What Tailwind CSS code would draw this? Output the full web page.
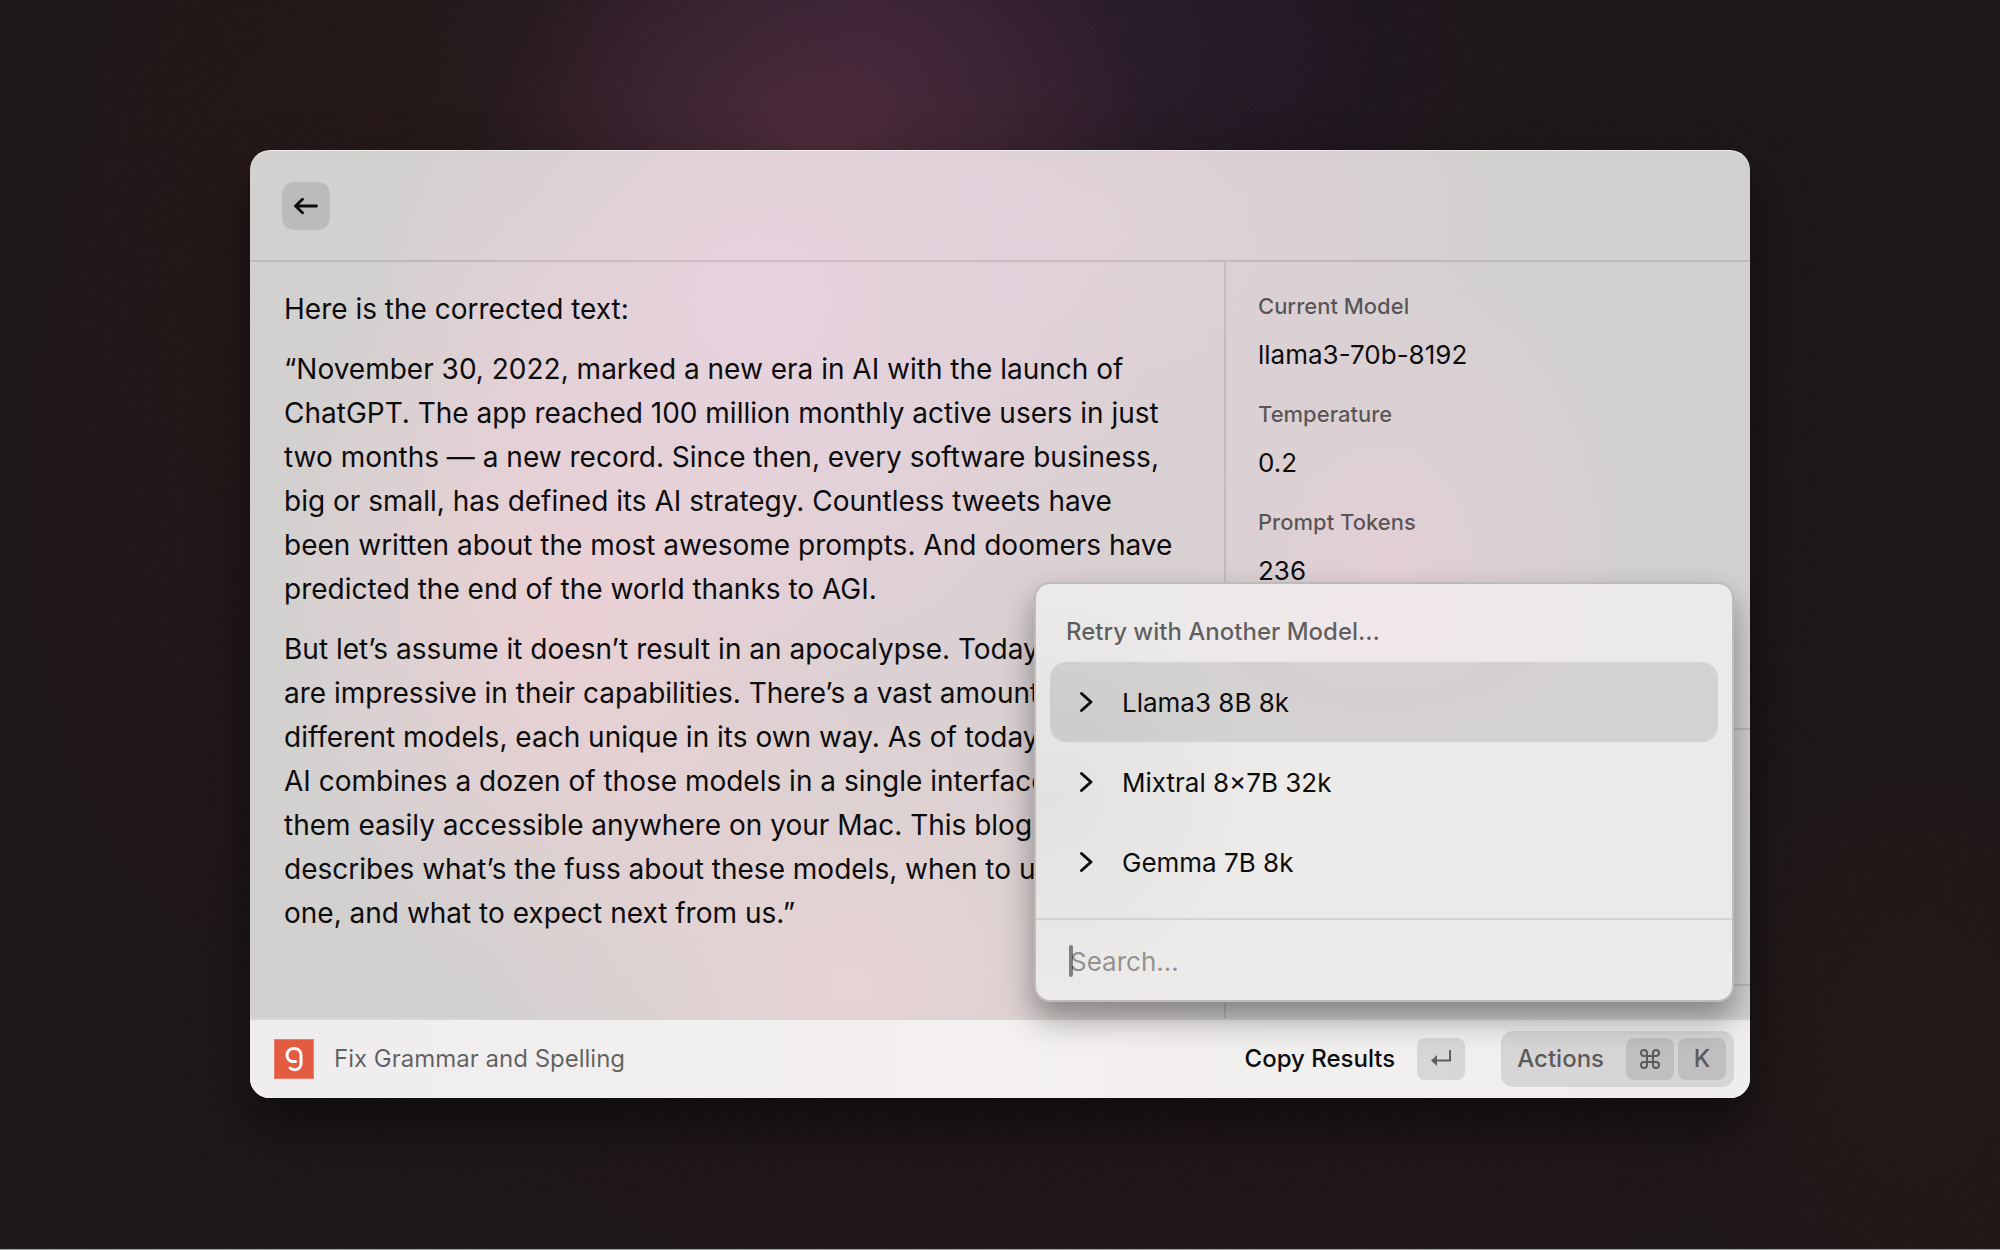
<!DOCTYPE html>
<html lang="en">
<head>
<meta charset="utf-8">
<meta name="viewport" content="width=device-width, initial-scale=1">
<title>Fix Grammar and Spelling</title>
<script src="https://cdn.jsdelivr.net/npm/@tailwindcss/browser@4"></script>
</head>
<body class="relative min-h-screen border-b border-[#a5a3a3] bg-[#1a1415] bg-[radial-gradient(ellipse_17%_22%_at_41%_12%,#522b3bcc,transparent),radial-gradient(ellipse_24%_30%_at_44%_4%,#381f36cc,transparent),radial-gradient(ellipse_12%_40%_at_12%_40%,#2c121566,transparent),radial-gradient(ellipse_18%_34%_at_19%_12%,#271614aa,transparent),radial-gradient(ellipse_16%_20%_at_64%_4%,#1e141f,transparent),radial-gradient(ellipse_40%_12%_at_58%_94%,#21111466,transparent),radial-gradient(ellipse_14%_30%_at_96%_84%,#201614,transparent)] px-[12.5%] pt-[150px] pb-[150px] font-['Inter',sans-serif] text-[#0c0c0c] [font-optical-sizing:none]">
<!-- fine grain over the desktop, behind the window -->
<svg class="pointer-events-none absolute inset-0 h-full w-full opacity-[0.05]" aria-hidden="true"><filter id="grain"><feTurbulence type="fractalNoise" baseFrequency="0.7" numOctaves="2" stitchTiles="stitch"/><feColorMatrix type="saturate" values="0"/></filter><rect width="100%" height="100%" filter="url(#grain)"/></svg>
<main class="relative rounded-[20px] bg-[#d3d0d0] bg-[radial-gradient(ellipse_26%_40%_at_34%_16%,#e6d2dc_10%,transparent),radial-gradient(ellipse_20%_44%_at_22%_48%,#ebd0d4,transparent),radial-gradient(ellipse_24%_32%_at_40%_88%,#e8d3d4,transparent),radial-gradient(ellipse_16%_34%_at_76%_44%,#e3d0d7,transparent),radial-gradient(ellipse_30%_30%_at_54%_8%,#e1d1d9,transparent),radial-gradient(ellipse_40%_50%_at_40%_40%,#dfd0d5,transparent)] shadow-[inset_0_1px_0_#eeeaeb,0_28px_56px_rgba(0,0,0,0.5)]">
  <header class="h-28 border-b-2 border-black/10 px-8 pt-8">
    <button type="button" aria-label="Back" class="flex size-12 items-center justify-center rounded-xl bg-black/10">
      <svg class="h-6 w-6" viewBox="0 0 24 24" fill="none" stroke="currentColor" stroke-width="2.8" stroke-linecap="round" stroke-linejoin="round"><path d="M1.500 12h21M8.500 5.300L1.500 12l7 6.700"/></svg>
    </button>
  </header>

  <div class="flex">
    <article class="min-w-0 flex-1 space-y-4 pt-[25px] pr-6 pb-[83px] pl-[34px] text-[28px] leading-[44px]">
      <p>Here is the corrected text:</p>
      <p>“November 30, 2022, marked a new era in AI with the launch of<br>ChatGPT. The app reached 100 million monthly active users in just<br>two months — a new record. Since then, every software business,<br>big or small, has defined its AI strategy. Countless tweets have<br>been written about the most awesome prompts. And doomers have<br>predicted the end of the world thanks to AGI.</p>
      <p>But let’s assume it doesn’t result in an apocalypse. Today’s LLMs<br>are impressive in their capabilities. There’s a vast amount of<br>different models, each unique in its own way. As of today, Raycast<br>AI combines a dozen of those models in a single interface, making<br>them easily accessible anywhere on your Mac. This blog post<br>describes what’s the fuss about these models, when to use which<br>one, and what to expect next from us.”</p>
    </article>
    <aside class="flex w-[526px] flex-col border-l-2 border-black/10 text-[26px] leading-8">
      <dl class="space-y-[27px] px-8 pt-7">
        <div class="space-y-[17px]">
          <dt class="text-[22px] font-medium text-black/60">Current Model</dt>
          <dd>llama3-70b-8192</dd>
        </div>
        <div class="space-y-[17px]">
          <dt class="text-[22px] font-medium text-black/60">Temperature</dt>
          <dd>0.2</dd>
        </div>
        <div class="space-y-[17px]">
          <dt class="text-[22px] font-medium text-black/60">Prompt Tokens</dt>
          <dd>236</dd>
        </div>
      </dl>
      <div class="mt-auto h-[258px] border-y-2 border-black/10"></div>
      <div class="h-8"></div>
    </aside>
  </div>

  <footer class="flex h-20 items-center rounded-b-[20px] border-t-2 border-[#d8d5d5] bg-[#efeeed] bg-linear-to-r from-[#efedee] via-[#f3f0ef] to-[#efedee] pr-4 pl-6 text-2xl">
    <svg class="size-10" viewBox="0 0 40 40" fill="none" role="img" aria-label="Grammar"><path fill="#e35c41" d="M0 0h40v40H0z"/><path stroke="#ea8069" d="M.5.5h39v39H.5z"/><path stroke="#fff" stroke-width="3" stroke-linecap="round" d="M21.500 22.500H19C15.300 22.500 13 20 13 16.300C13 12.300 15.800 9.500 20 9.500C24.200 9.500 27 12.300 27 16.300V24C27 28 24.700 30.700 21 30.700C19 30.700 17.300 30.200 16 29"/></svg>
    <span class="ml-5 text-black/60">Fix Grammar and Spelling</span>
    <button type="button" class="ml-auto flex items-center gap-[22px] font-medium">Copy Results
      <kbd class="flex h-[42px] w-12 items-center justify-center rounded-lg bg-black/10 text-[#5f5e5e]">
        <svg class="size-6" viewBox="0 0 24 24" fill="none" stroke="currentColor" stroke-width="2"><path d="M21 3v10.500H6"/><path d="M8 8v11L2 13.500z" fill="currentColor" stroke="none"/></svg>
      </kbd>
    </button>
    <button type="button" class="ml-9 flex h-14 items-center rounded-xl bg-black/10 pr-2 pl-4 font-medium text-[#5c5b5b]">Actions
      <kbd class="ml-[22px] flex h-[42px] w-12 items-center justify-center rounded-lg bg-black/10">
        <svg class="size-6" viewBox="0 0 24 24" fill="none" stroke="currentColor" stroke-width="2"><path d="M9 9h6v6H9zM9 9H6a3 3 0 1 1 3-3zM15 9V6a3 3 0 1 1 3 3zM15 15h3a3 3 0 1 1-3 3zM9 15v3a3 3 0 1 1-3-3z"/></svg>
      </kbd>
      <kbd class="ml-1 flex h-[42px] w-12 items-center justify-center rounded-lg bg-black/10 font-['Inter',sans-serif]">K</kbd>
    </button>
  </footer>

  <section aria-label="Actions" class="absolute right-4 bottom-24 w-[700px] rounded-2xl border-2 border-[#bebbbb] bg-[#ecebea] bg-[radial-gradient(ellipse_30%_30%_at_50%_8%,#f0e7e9,transparent),radial-gradient(ellipse_30%_50%_at_2%_52%,#e3e2e1,transparent),linear-gradient(#ece9e9,#edebea)] bg-clip-padding shadow-[0_16px_32px_rgba(0,0,0,0.38)]">
    <h2 class="px-[30px] pt-8 pb-[14px] text-2xl leading-8 font-medium text-black/60">Retry with Another Model…</h2>
    <ul class="mx-3.5 mb-4 text-[26px]">
      <li><button type="button" class="flex h-20 w-full items-center gap-5 rounded-2xl bg-black/10 pl-5 text-left"><svg class="size-8" viewBox="0 0 32 32" fill="none" stroke="currentColor" stroke-width="3" stroke-linecap="round" stroke-linejoin="round"><path d="M11.500 7.500l9.500 8.500-9.500 8.500"/></svg>Llama3 8B 8k</button></li>
      <li><button type="button" class="flex h-20 w-full items-center gap-5 rounded-2xl pl-5 text-left"><svg class="size-8" viewBox="0 0 32 32" fill="none" stroke="currentColor" stroke-width="3" stroke-linecap="round" stroke-linejoin="round"><path d="M11.500 7.500l9.500 8.500-9.500 8.500"/></svg>Mixtral 8×7B 32k</button></li>
      <li><button type="button" class="flex h-20 w-full items-center gap-5 rounded-2xl pl-5 text-left"><svg class="size-8" viewBox="0 0 32 32" fill="none" stroke="currentColor" stroke-width="3" stroke-linecap="round" stroke-linejoin="round"><path d="M11.500 7.500l9.500 8.500-9.500 8.500"/></svg>Gemma 7B 8k</button></li>
    </ul>
    <div class="relative border-t-2 border-black/10">
      <input type="text" aria-label="Search" placeholder="Search…" class="h-20 w-full px-[34px] pt-0.5 text-[26px] outline-none placeholder:text-black/40">
      <span class="absolute top-[25px] left-[33px] h-8 w-1 rounded-full bg-black/45"></span>
    </div>
  </section>
</main>
</body>
</html>
